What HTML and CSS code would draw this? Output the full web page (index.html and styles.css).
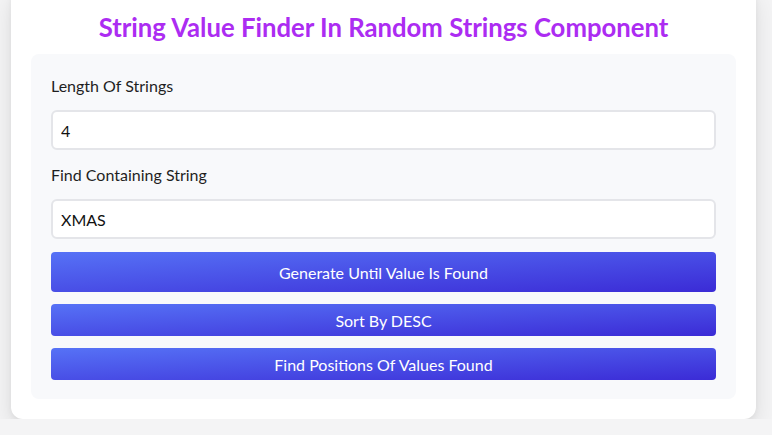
FILE: index.html
```html
<!DOCTYPE html>
<html>
<head>
<meta charset="utf-8">
<link rel="stylesheet" href="styles.css">
</head>
<body>
<div class="card">
  <h1 class="title">String Value Finder In Random Strings Component</h1>
  <div class="panel">
    <label class="label">Length Of Strings</label>
    <input class="field" type="text" value="4">
    <label class="label">Find Containing String</label>
    <input class="field" type="text" value="XMAS">
    <button class="btn btn-tall">Generate Until Value Is Found</button>
    <button class="btn">Sort By DESC</button>
    <button class="btn">Find Positions Of Values Found</button>
  </div>
</div>
</body>
</html>
```

FILE: styles.css
```css
html, body {
  margin: 0;
  padding: 0;
  background: #f4f4f5;
  font-family: "Lato", "Noto Sans", sans-serif;
}
.card {
  margin: -12px 0 0 11px;
  width: 745px;
  box-sizing: border-box;
  background: #ffffff;
  border-radius: 12px;
  box-shadow: 0 10px 25px rgba(0, 0, 0, 0.1), 0 2px 6px rgba(0, 0, 0, 0.05);
  padding: 24px 20px 20px;
}
.title {
  margin: 0 0 12px;
  height: 30px;
  line-height: 30px;
  text-align: center;
  font-size: 25.7px;
  font-weight: 700;
  color: #ac2cf2;
}
.panel {
  background: #f8f9fb;
  border-radius: 8px;
  padding: 20px 20px 19px;
  display: flex;
  flex-direction: column;
}
.label {
  display: block;
  font-size: 16px;
  line-height: 24px;
  color: #1f1f1f;
  margin-bottom: 12px;
}
.field {
  display: block;
  box-sizing: border-box;
  width: 100%;
  height: 40px;
  margin: 0 0 13px;
  padding: 0 8px;
  border: 2px solid #e4e5e9;
  border-radius: 6px;
  background: #fff;
  font-family: inherit;
  font-size: 16px;
  color: #111;
  outline: none;
}
.btn {
  display: block;
  width: 100%;
  height: 32px;
  margin: 0 0 12px;
  border: none;
  border-radius: 4px;
  background: linear-gradient(to bottom right, #5672f6, #3b2bd6);
  color: #fff;
  font-family: inherit;
  font-size: 16px;
  padding: 0;
}
.btn:last-child {
  margin-bottom: 0;
}
.btn-tall {
  height: 40px;
}
```
